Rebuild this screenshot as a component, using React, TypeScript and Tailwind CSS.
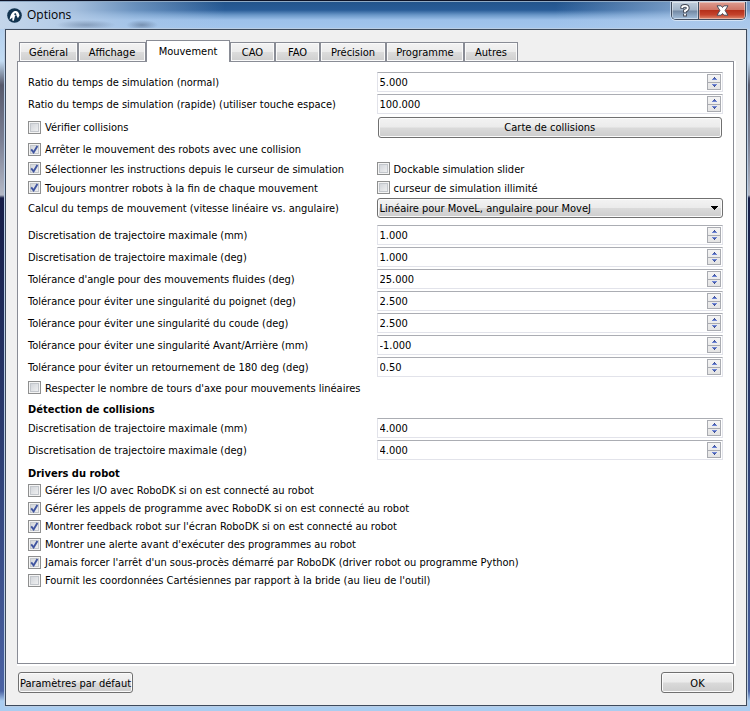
import { useState } from 'react';
import type { ReactNode } from 'react';
import clsx from 'clsx';

const tabs = [
  { name: 'Général', width: 'w-[59px]' },
  { name: 'Affichage', width: 'w-[68px]' },
  { name: 'Mouvement', width: 'w-[84px]' },
  { name: 'CAO', width: 'w-[45px]' },
  { name: 'FAO', width: 'w-[45px]' },
  { name: 'Précision', width: 'w-[66px]' },
  { name: 'Programme', width: 'w-[78px]' },
  { name: 'Autres', width: 'w-[54px]' },
];

const pathSettings = [
  { id: 'path-mm', label: 'Discretisation de trajectoire maximale (mm)', value: '1.000' },
  { id: 'path-deg', label: 'Discretisation de trajectoire maximale (deg)', value: '1.000' },
  { id: 'smooth-angle', label: "Tolérance d'angle pour des mouvements fluides (deg)", value: '25.000' },
  { id: 'wrist', label: 'Tolérance pour éviter une singularité du poignet (deg)', value: '2.500' },
  { id: 'elbow', label: 'Tolérance pour éviter une singularité du coude (deg)', value: '2.500' },
  { id: 'front-back', label: 'Tolérance pour éviter une singularité Avant/Arrière (mm)', value: '-1.000' },
  { id: 'flip', label: 'Tolérance pour éviter un retournement de 180 deg (deg)', value: '0.50' },
];

const driverSettings = [
  { label: 'Gérer les I/O avec RoboDK si on est connecté au robot', checked: false },
  { label: 'Gérer les appels de programme avec RoboDK si on est connecté au robot', checked: true },
  { label: "Montrer feedback robot sur l'écran RoboDK si on est connecté au robot", checked: true },
  { label: "Montrer une alerte avant d'exécuter des programmes au robot", checked: true },
  { label: "Jamais forcer l'arrêt d'un sous-procès démarré par RoboDK (driver robot ou programme Python)", checked: true },
  { label: "Fournit les coordonnées Cartésiennes par rapport à la bride (au lieu de l'outil)", checked: false },
];

const raised =
  'rounded-[3px] border border-[#707070] pt-0.5 bg-[linear-gradient(#f3f3f3_0%,#ebebeb_48%,#dadada_52%,#cdcdcd_100%)] shadow-[inset_0_0_0_1px_#fbfbfb]';

function Row({ className, children }: { className: string; children: ReactNode }) {
  return <div className={clsx('grid grid-cols-2 items-center gap-x-0.5', className)}>{children}</div>;
}

function Arrow({ up = false }: { up?: boolean }) {
  return (
    <svg width="5" height="3" viewBox="0 0 5 3" shapeRendering="crispEdges" className={up ? '' : 'rotate-180'}>
      <path d="M2 0h1v1H2z" fill="#3b4a8c" />
      <path d="M1 1h3v1H1z" fill="#4a5fae" />
      <path d="M0 2h5v1H0z" fill="#6f86d6" />
    </svg>
  );
}

function SpinField({ id, label, value }: { id: string; label: string; value: string }) {
  const [text, setText] = useState(value);

  const step = (delta: number) => {
    const decimals = (text.split('.')[1] ?? '').length;
    setText((Number(text) + delta).toFixed(decimals));
  };

  return (
    <Row className="h-[22px]">
      <label htmlFor={id} className="pt-0.5">
        {label}
      </label>
      <div className="flex h-5 items-center border border-[#e2e3ea] border-t-[#abadb3] bg-white pr-px">
        <input
          id={id}
          type="text"
          value={text}
          onChange={(e) => setText(e.target.value)}
          className="min-w-0 flex-1 pl-0.5 pt-0.5 outline-none"
        />
        <div className="flex h-4 w-3.5 flex-col divide-y divide-[#a9abb1] border border-[#a9abb1] bg-linear-to-b from-[#f4f4f4] to-[#e4e4e4]">
          <button type="button" aria-label="Augmenter" onClick={() => step(1)} className="flex flex-1 items-center justify-center">
            <Arrow up />
          </button>
          <button type="button" aria-label="Diminuer" onClick={() => step(-1)} className="flex flex-1 items-center justify-center">
            <Arrow />
          </button>
        </div>
      </div>
    </Row>
  );
}

function Check({ label, checked = false }: { label: string; checked?: boolean }) {
  return (
    <label className="flex items-center gap-1 whitespace-nowrap">
      <span className="grid size-[13px] shrink-0 place-items-center">
        <input
          type="checkbox"
          defaultChecked={checked}
          className="peer col-start-1 row-start-1 size-[13px] appearance-none border border-[#8e8f8f] bg-linear-to-br from-[#cbcfd5] to-[#f6f6f6] shadow-[inset_0_0_0_1px_#f4f4f4,inset_0_0_0_2px_#c3c7cc]"
        />
        <svg
          width="9"
          height="9"
          viewBox="0 0 9 9"
          className="pointer-events-none invisible col-start-1 row-start-1 peer-checked:visible"
        >
          <path d="M1.2 4.4 3.6 7.4 7.4 1" fill="none" stroke="#4055a0" strokeWidth="1.9" />
        </svg>
      </span>
      <span className="pt-0.5">{label}</span>
    </label>
  );
}

function TitleBar() {
  return (
    <header className="flex items-start justify-between pl-[7px] pr-1">
      <div className="flex h-[26px] items-center gap-[5px]">
        <svg width="15" height="15" viewBox="0 0 15 15">
          <circle cx="7.5" cy="7.5" r="7.3" fill="#123450" />
          <path d="M2.6 11.8C3.2 7.8 4.6 4.2 7.8 3.1c2.7-.5 4.2 1.7 4.7 4.4l-1.6 2.7-1.5-3-1.3.2-1.2 5.4-1.7-.3.3-3z" fill="#fff" />
          <path d="m7 6 1.4-1.1 1.2 1.5L8 7.200z" fill="#123450" />
        </svg>
        <h1 className="font-['Open_Sans','Noto_Sans',sans-serif] text-xs text-black">Options</h1>
      </div>
      <div className="flex h-[18px] overflow-hidden rounded-b-[5px] border border-t-0 border-[#414d60] shadow-[0_0_0_1px_#ffffff80]">
        <button
          type="button"
          aria-label="Aide"
          className="flex w-[27px] items-center justify-center border-r border-[#414d60] bg-[linear-gradient(#c0cddb_0%,#a2b4c8_48%,#7288a3_52%,#a5c0dc_100%)] shadow-[inset_0_0_0_1px_#ffffff70]"
        >
          <svg width="10" height="13" viewBox="0 0 10 14" fill="none">
            <path d="M2 5V3.500Q2 2 5 2t3 2.200Q8 6 5 7.200V9.500M5 10.500v3" stroke="#414653" strokeWidth="4" />
            <path d="M2 4.300V3.500Q2 2 5 2t3 2.200Q8 6 5 7.200V9M5 10.500v2" stroke="#fff" strokeWidth="2" />
          </svg>
        </button>
        <button
          type="button"
          aria-label="Fermer"
          className="flex w-[46px] items-center justify-center bg-[linear-gradient(#dd9c90_0%,#cf7565_46%,#b5301b_50%,#c4432c_75%,#de8a70_100%)] shadow-[inset_0_0_0_1px_#ffffff60]"
        >
          <svg width="13" height="11" viewBox="0 0 13 11">
            <path
              d="M1 .8h4.100l1.400 1.700L7.900.8H12L9.100 5.500l2.900 4.700H7.900L6.500 8.500l-1.400 1.700H1l2.900-4.700z"
              fill="#fff"
              stroke="#4a4d5c"
            />
          </svg>
        </button>
      </div>
    </header>
  );
}

export default function App() {
  const [active, setActive] = useState('Mouvement');

  return (
    <div className="flex min-h-screen flex-col border-t border-t-[#0d1226] bg-[linear-gradient(to_bottom,#a6c6ea_0px,#c3dcf3_60px,#56596b_84px,#7b8094_140px,#b4b9c6_194px,#161d47_197px,#2c3d70_440px,#4a62a3_690px,#aacdf0_700px)] font-['DejaVu_Sans_Condensed','DejaVu_Sans',sans-serif] text-[11px] leading-[14px] text-black">
      <div className="h-7 shrink-0 border-t border-t-[#8fa9c4] bg-[radial-gradient(ellipse_16px_5px_at_142px_23px,#5d7391a0,transparent),radial-gradient(ellipse_30px_5px_at_86px_23px,#5d739180,transparent),linear-gradient(90deg,#c4d6ea_0%,#b4cbe6e0_10%,#a9c6e680_18%,transparent_30%,transparent_74%,#b3cdec90_90%),linear-gradient(#23548c_0px,#295c98_8px,#6a97c8_13px,#9cc0ea_18px,#a2c5ec_27px)]">
        <TitleBar />
      </div>
      <div className="mb-[5px] ml-[5px] mr-[3px] flex flex-1 flex-col border border-[#3d4a5c] bg-[#f0f0f0] pb-3 pl-[11px] pr-3 pt-[11px] shadow-[0_0_0_1px_#b9cde4]">
        <div role="tablist" className="z-10 flex h-5 shrink-0 items-end pl-0.5">
          {tabs.map((tab) => (
            <button
              key={tab.name}
              type="button"
              role="tab"
              aria-selected={active === tab.name}
              onClick={() => setActive(tab.name)}
              className={clsx(
                'shrink-0 border border-b-0 border-[#898c95]',
                tab.width,
                active === tab.name
                  ? '-mb-px h-[22px] bg-white'
                  : 'h-[19px] bg-[linear-gradient(#f3f3f3_0%,#ebebeb_50%,#dcdcdc_52%,#cfcfcf_100%)] pt-0.5 shadow-[inset_0_0_0_1px_#fafafa]',
              )}
            >
              {tab.name}
            </button>
          ))}
        </div>

        <main className="flex-1 border border-[#898c95] bg-white px-2.5 pt-[9px] shadow-[1px_1px_0_1px_#fff]">
          <SpinField id="ratio-normal" label="Ratio du temps de simulation (normal)" value="5.000" />
          <SpinField id="ratio-fast" label="Ratio du temps de simulation (rapide) (utiliser touche espace)" value="100.000" />
          <Row className="h-6">
            <Check label="Vérifier collisions" />
            <button type="button" className={clsx('mx-px h-[21px]', raised)}>
              Carte de collisions
            </button>
          </Row>
          <Row className="h-5">
            <Check label="Arrêter le mouvement des robots avec une collision" checked />
          </Row>
          <Row className="h-[19px]">
            <Check label="Sélectionner les instructions depuis le curseur de simulation" checked />
            <Check label="Dockable simulation slider" />
          </Row>
          <Row className="h-[19px]">
            <Check label="Toujours montrer robots à la fin de chaque mouvement" checked />
            <Check label="curseur de simulation illimité" />
          </Row>
          <Row className="mb-[5px] h-[22px]">
            <label htmlFor="time-mode" className="pt-0.5">
              Calcul du temps de mouvement (vitesse linéaire vs. angulaire)
            </label>
            <div className="grid items-center">
              <select id="time-mode" className={clsx('col-start-1 row-start-1 h-5 appearance-none pl-0.5', raised)}>
                <option>Linéaire pour MoveL, angulaire pour MoveJ</option>
                <option>Linéaire</option>
                <option>Angulaire</option>
              </select>
              <svg
                width="7"
                height="4"
                viewBox="0 0 7 4"
                shapeRendering="crispEdges"
                className="pointer-events-none col-start-1 row-start-1 mr-[5px] justify-self-end"
              >
                <path d="M0 0h7v1H6v1H5v1H4v1H3V3H2V2H1V1H0z" />
              </svg>
            </div>
          </Row>

          {pathSettings.map((setting) => (
            <SpinField key={setting.id} {...setting} />
          ))}
          <Row className="h-[19px]">
            <Check label="Respecter le nombre de tours d'axe pour mouvements linéaires" />
          </Row>

          <h2 className="flex h-5 items-end font-bold">Détection de collisions</h2>
          <SpinField id="collision-mm" label="Discretisation de trajectoire maximale (mm)" value="4.000" />
          <SpinField id="collision-deg" label="Discretisation de trajectoire maximale (deg)" value="4.000" />

          <h2 className="flex h-5 items-end font-bold">Drivers du robot</h2>
          {driverSettings.map((setting) => (
            <Row key={setting.label} className="h-[18px]">
              <Check {...setting} />
            </Row>
          ))}
        </main>

        <footer className="flex shrink-0 items-center justify-between pl-px pt-2">
          <button type="button" className={clsx('h-[21px] min-w-[115px]', raised)}>
            Paramètres par défaut
          </button>
          <button type="button" className={clsx('h-[21px] w-[73px]', raised)}>
            OK
          </button>
        </footer>
      </div>
    </div>
  );
}
